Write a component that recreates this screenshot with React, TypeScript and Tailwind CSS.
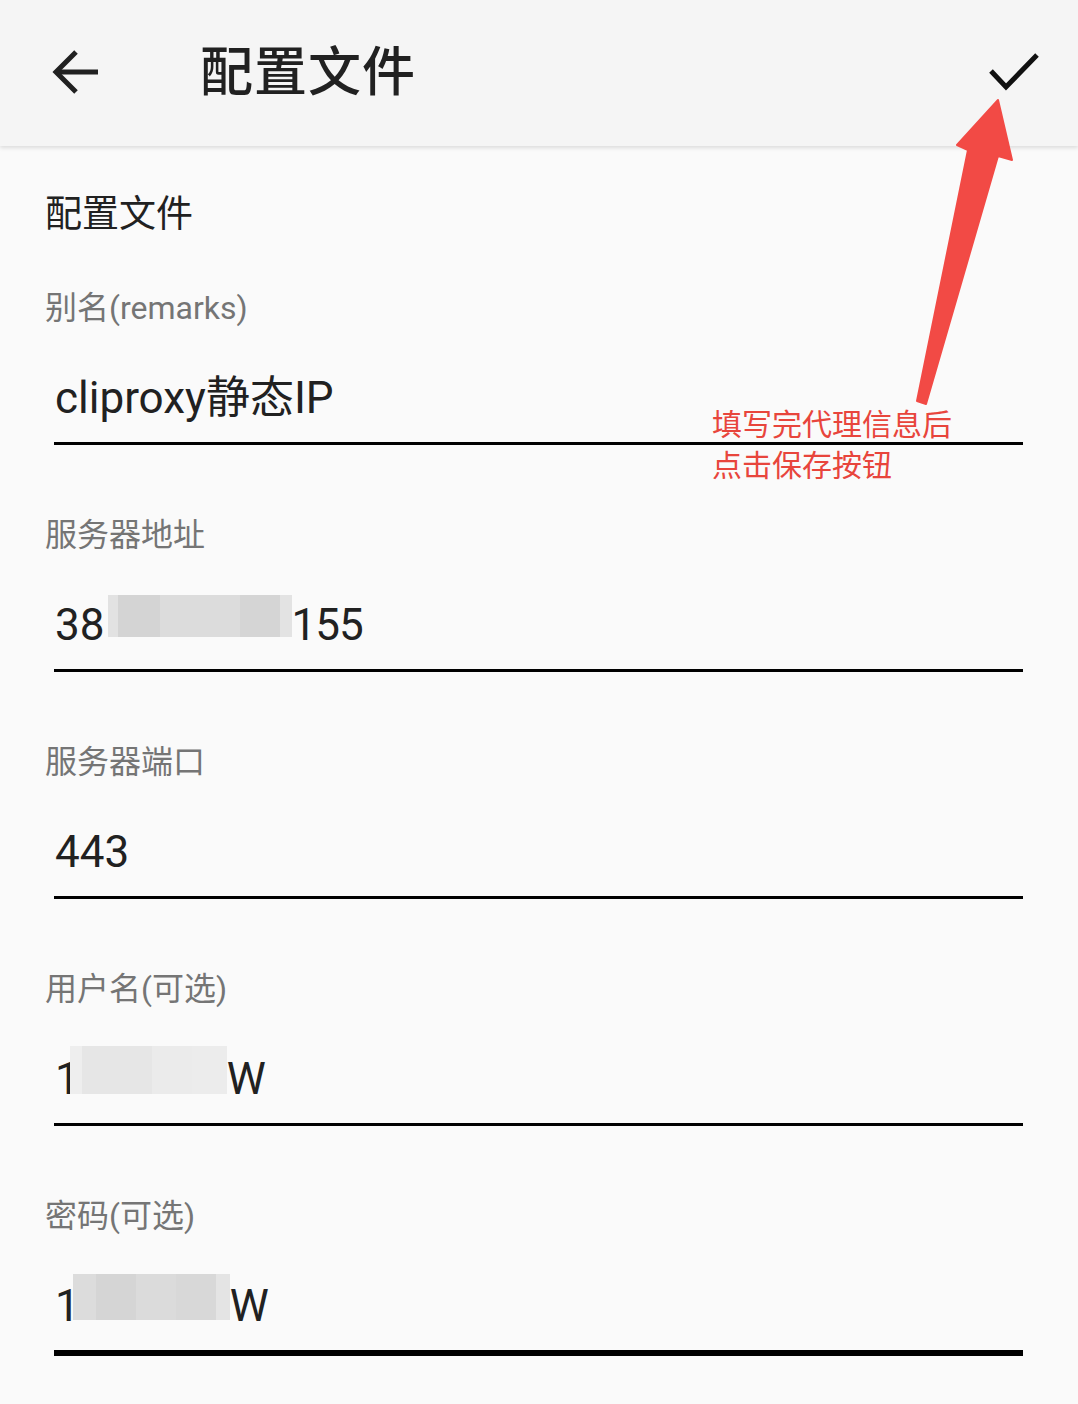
import React from "react";

const cjk = "font-['Roboto','Noto_Sans_CJK_SC',sans-serif]";

type Seg = { w: number; c: string };

const Blur = ({ segs, h }: { segs: Seg[]; h: number }) => (
  <span className="inline-flex" style={{ height: h }}>
    {segs.map((s, i) => (
      <span key={i} style={{ width: s.w, background: s.c }} className="h-full" />
    ))}
  </span>
);

const Field = ({
  label,
  children,
  focused = false,
  last = false,
}: {
  label: string;
  children: React.ReactNode;
  focused?: boolean;
  last?: boolean;
}) => (
  <div className={last ? "" : "mb-[70px]"}>
    <div className="ml-[45px] h-[40px] text-[32px] leading-[40px] text-[#757575]">{label}</div>
    <div
      className={`ml-[54px] mr-[55px] pt-[40px] pb-[14px] border-black ${
        focused ? "border-b-[6px]" : "border-b-[3px]"
      }`}
    >
      <div className="flex items-center h-[60px] pl-[1px] text-[44px] leading-[60px] text-[#212121]">
        {children}
      </div>
    </div>
  </div>
);

export default function App() {
  return (
    <div className={`relative w-[1078px] h-[1404px] overflow-hidden bg-[#fafafa] ${cjk}`}>
      {/* Toolbar */}
      <header className="relative z-10 h-[146px] bg-[#f5f5f5] flex items-center shadow-[0_2px_4px_rgba(0,0,0,0.12)]">
        <button className="ml-[52px] w-[50px] h-[50px] flex items-center justify-center">
          <svg width="50" height="50" viewBox="0 0 50 50" fill="none" stroke="#212121" strokeWidth="5">
            <path d="M46 24H6" />
            <path d="M24 4L4 24L24 44" strokeLinejoin="miter" />
          </svg>
        </button>
        <h1 className="ml-[98px] text-[53px] leading-none font-medium text-[#212121] tracking-[1px]">
          配置文件
        </h1>
        <button className="ml-auto mr-[38px] w-[52px] h-[52px] flex items-center justify-center">
          <svg width="52" height="44" viewBox="0 0 52 44" fill="none" stroke="#111" strokeWidth="5">
            <path d="M3 20L18 36L49 4" />
          </svg>
        </button>
      </header>

      {/* Form */}
      <main className="pt-[45px]">
        <div className="ml-[45px] h-[48px] text-[37px] leading-[48px] text-[#212121] mb-[49px]">配置文件</div>

        <Field label="别名(remarks)">cliproxy静态IP</Field>

        <Field label="服务器地址">
          <span>38</span>
          <span className="ml-[4px] mr-[-1px] -mt-[6px]">
            <Blur
              h={42}
              segs={[
                { w: 10, c: "#e2e2e2" },
                { w: 42, c: "#d4d4d4" },
                { w: 80, c: "#dcdcdc" },
                { w: 40, c: "#d5d5d5" },
                { w: 12, c: "#e3e3e3" },
              ]}
            />
          </span>
          <span className="tracking-[-1px]">155</span>
        </Field>

        <Field label="服务器端口">443</Field>

        <Field label="用户名(可选)">
          <span>1</span>
          <span className="ml-[-10px] -mt-[4px]">
            <Blur
              h={48}
              segs={[
                { w: 12, c: "#eeeeee" },
                { w: 70, c: "#e6e6e6" },
                { w: 40, c: "#ebebeb" },
                { w: 35, c: "#ececec" },
              ]}
            />
          </span>
          <span>W</span>
        </Field>

        <Field label="密码(可选)" focused last>
          <span>1</span>
          <span className="ml-[-7px] -mt-[4px]">
            <Blur
              h={46}
              segs={[
                { w: 23, c: "#dcdcdc" },
                { w: 40, c: "#d5d5d5" },
                { w: 40, c: "#dbdbdb" },
                { w: 40, c: "#d8d8d8" },
                { w: 14, c: "#e4e4e4" },
              ]}
            />
          </span>
          <span>W</span>
        </Field>
      </main>

      {/* Annotation overlay */}
      <svg
        className="absolute left-0 top-0 z-20 pointer-events-none"
        width="1078"
        height="1404"
        viewBox="0 0 1078 1404"
      >
        <polygon
          points="998,100 1012,160 998,156 926,404 917,401 968,150 957,145"
          fill="#f24a45"
          strokeLinejoin="round"
          stroke="#f24a45"
          strokeWidth="2"
        />
      </svg>
      <div className="absolute left-[712px] top-[404px] z-20 text-[30px] leading-[41px] text-[#e8453c]">
        <div>填写完代理信息后</div>
        <div>点击保存按钮</div>
      </div>
    </div>
  );
}
